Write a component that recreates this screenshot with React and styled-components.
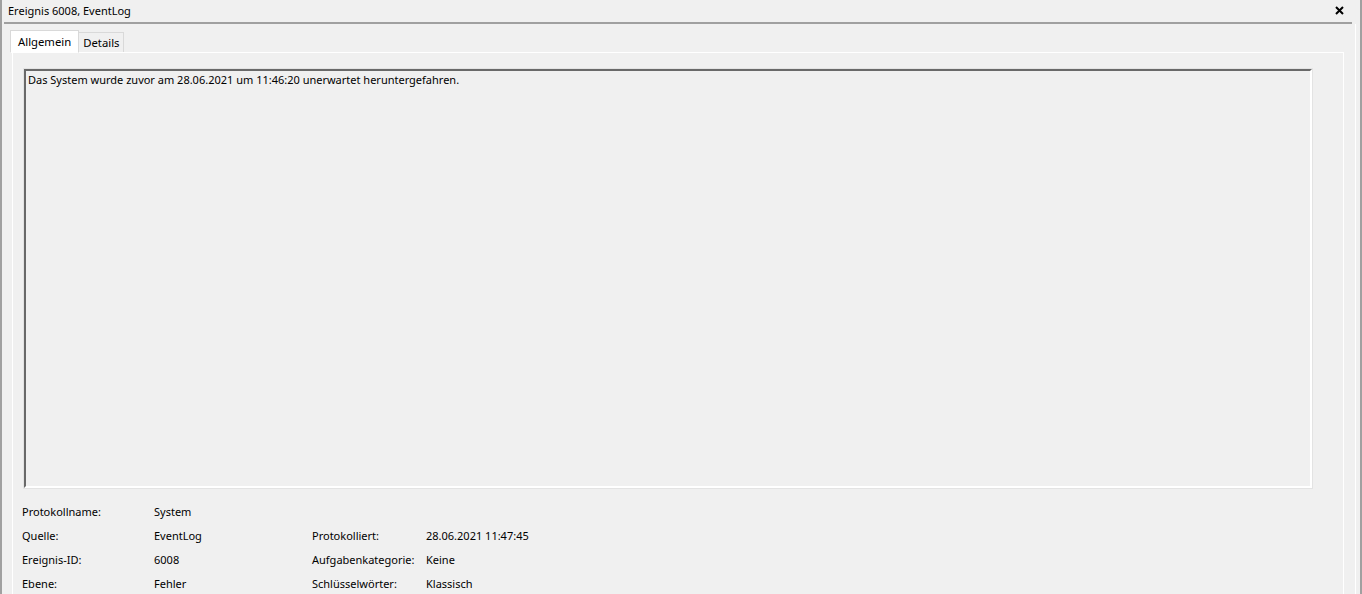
import React from 'react';
import styled, { createGlobalStyle } from 'styled-components';

const Global = createGlobalStyle`
  html, body { margin: 0; padding: 0; background: #f0f0f0; }
  body { font-family: 'Noto Sans', 'Open Sans', sans-serif; font-size: 11px; color: #000; }
`;

const Window = styled.div`
  width: 1362px;
  height: 594px;
  box-sizing: border-box;
  border-left: 2px solid #a0a0a0;
  border-right: 2px solid #a0a0a0;
  overflow: hidden;
  display: flex;
  flex-direction: column;
`;

const TitleBar = styled.div`
  height: 22px;
  display: flex;
  align-items: center;
  justify-content: space-between;
  padding: 0 8px 0 4px;
  margin: 0 8px 0 2px;
  border-bottom: 2px solid #a0a0a0;
`;

const Title = styled.span`
  font-size: 11px;
  line-height: 22px;
`;

const Close = styled.svg`
  width: 9px;
  height: 9px;
  margin-top: -1px;
`;

const Body = styled.div`
  flex: 1;
  display: flex;
  border-right: 1px solid #fff;
  margin-right: 4px;
`;

const Content = styled.div`
  flex: 1;
  padding: 6px 11px 0 10px;
  display: flex;
  flex-direction: column;
`;

const Tabs = styled.div`
  display: flex;
  align-items: flex-end;
  height: 22px;
  margin-left: -2px;
  position: relative;
  z-index: 1;
`;

const Tab = styled.div`
  box-sizing: border-box;
  height: ${p => (p.$active ? '23px' : '20px')};
  line-height: ${p => (p.$active ? '21px' : '19px')};
  padding: 0 ${p => (p.$active ? '7px' : '4px')};
  background: ${p => (p.$active ? '#fff' : '#f0f0f0')};
  border: 1px solid #d9d9d9;
  border-bottom: ${p => (p.$active ? '1px solid #fff' : 'none')};
  margin-left: ${p => (p.$active ? '0' : '-1px')};
  margin-bottom: ${p => (p.$active ? '-1px' : '0')};
  font-size: 11.3px;
`;

const Panel = styled.div`
  flex: 1;
  border: 1px solid #fff;
  border-bottom: none;
  padding: 16px 31px 0 11px;
  display: flex;
  flex-direction: column;
`;

const Message = styled.div`
  height: 419px;
  flex-shrink: 0;
  box-sizing: border-box;
  border-top: 2px solid #696969;
  border-left: 2px solid #696969;
  border-right: 2px solid #fff;
  border-bottom: 2px solid #fff;
  outline: 1px solid #e3e3e3;
  padding: 1px 2px;
  line-height: 16px;
`;

const Fields = styled.div`
  display: grid;
  grid-template-columns: 132px 158px 114px 1fr;
  grid-auto-rows: 24px;
  margin: 11px 0 0 -2px;
  align-items: center;
`;

const Cell = styled.span`
  white-space: nowrap;
`;

const rows = [
  ['Protokollname:', 'System', '', ''],
  ['Quelle:', 'EventLog', 'Protokolliert:', '28.06.2021 11:47:45'],
  ['Ereignis-ID:', '6008', 'Aufgabenkategorie:', 'Keine'],
  ['Ebene:', 'Fehler', 'Schlüsselwörter:', 'Klassisch'],
];

export default function App() {
  return (
    <>
      <Global />
      <Window>
        <TitleBar>
          <Title>Ereignis 6008, EventLog</Title>
          <Close viewBox="0 0 9 9">
            <path d="M1 1 L8 8 M8 1 L1 8" stroke="#000" strokeWidth="2" />
          </Close>
        </TitleBar>
        <Body>
          <Content>
            <Tabs>
              <Tab $active>Allgemein</Tab>
              <Tab>Details</Tab>
            </Tabs>
            <Panel>
              <Message>
                Das System wurde zuvor am 28.06.2021 um 11:46:20 unerwartet heruntergefahren.
              </Message>
              <Fields>
                {rows.map((r, i) =>
                  r.map((c, j) => <Cell key={i + '-' + j}>{c}</Cell>)
                )}
              </Fields>
            </Panel>
          </Content>
        </Body>
      </Window>
    </>
  );
}
